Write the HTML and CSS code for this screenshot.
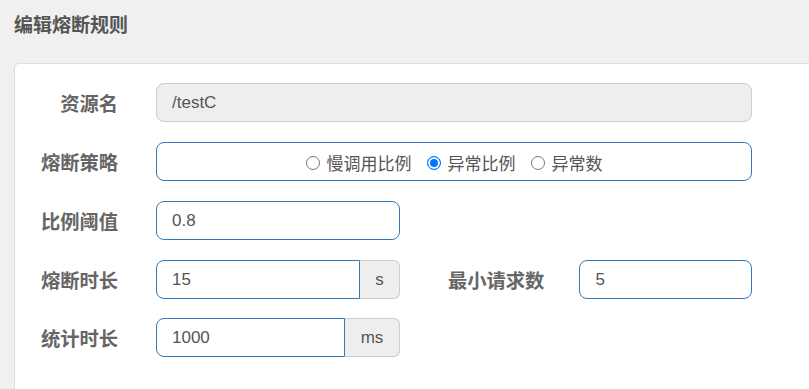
FILE: index.html
```html
<!DOCTYPE html>
<html lang="zh">
<head>
<meta charset="utf-8">
<title>编辑熔断规则</title>
<link rel="stylesheet" href="styles.css">
</head>
<body>
<div class="page">
  <h1 class="title">编辑熔断规则</h1>
  <div class="card">
    <div class="row">
      <label class="label">资源名</label>
      <div class="control full"><input class="input disabled" type="text" value="/testC" disabled></div>
    </div>
    <div class="row">
      <label class="label">熔断策略</label>
      <div class="control full">
        <div class="radio-box">
          <span class="radio-item"><span class="radio"></span>慢调用比例</span>
          <span class="radio-item"><span class="radio checked"></span>异常比例</span>
          <span class="radio-item"><span class="radio"></span>异常数</span>
        </div>
      </div>
    </div>
    <div class="row">
      <label class="label">比例阈值</label>
      <div class="control half"><input class="input" type="text" value="0.8"></div>
    </div>
    <div class="row">
      <label class="label">熔断时长</label>
      <div class="control half group">
        <input class="input grouped" type="text" value="15">
        <span class="addon addon-s">s</span>
      </div>
      <label class="label label2">最小请求数</label>
      <div class="control small"><input class="input" type="text" value="5"></div>
    </div>
    <div class="row">
      <label class="label">统计时长</label>
      <div class="control half group">
        <input class="input grouped" type="text" value="1000">
        <span class="addon addon-ms">ms</span>
      </div>
    </div>
  </div>
</div>
</body>
</html>
```

FILE: styles.css
```css
* { box-sizing: border-box; }
html, body {
  margin: 0;
  padding: 0;
  background: #f0f0f0;
  overflow: hidden;
  height: 389px;
}
body {
  font-family: "Noto Sans CJK SC", "Liberation Sans", sans-serif;
  color: #555;
}
.page {
  padding: 0 0 0 14px;
}
.title {
  margin: 0;
  padding-top: 11px;
  height: 63px;
  font-size: 19px;
  line-height: 26px;
  font-weight: 700;
  color: #555;
}
.card {
  width: 820px;
  height: 340px;
  background: #fff;
  border: 1px solid #ddd;
  border-radius: 5px;
  padding-top: 19px;
}
.row {
  display: flex;
  align-items: center;
  height: 39px;
  margin-bottom: 20px;
}
.row:nth-child(4) { margin-bottom: 19px; }
.label {
  width: 103px;
  text-align: right;
  font-size: 19.3px;
  font-weight: 700;
  color: #666;
  margin-right: 38px;
  white-space: nowrap;
}
.label2 {
  width: auto;
  margin-left: 48px;
  margin-right: 35px;
}
.control { height: 39px; display: flex; }
.full { width: 596px; }
.half { width: 244px; }
.small { width: 173px; }
.input {
  width: 100%;
  min-width: 0;
  height: 39px;
  border: 1px solid #337ab7;
  border-radius: 8px;
  padding: 0 15px;
  font-family: "Liberation Sans", Arial, sans-serif;
  font-size: 17px;
  color: #555;
  background: #fff;
  outline: none;
}
.input.disabled {
  background: #eee;
  border-color: #ccc;
  color: #555;
}
.grouped {
  border-radius: 8px 0 0 8px;
  flex: 1 1 0;
  width: 0;
}
.addon {
  flex: 0 0 auto;
  display: flex;
  align-items: center;
  justify-content: center;
  height: 39px;
  background: #eee;
  border: 1px solid #ccc;
  border-left: 0;
  border-radius: 0 6px 6px 0;
  font-family: "Liberation Sans", Arial, sans-serif;
  font-size: 17px;
  color: #555;
}
.addon-s { width: 40px; }
.addon-ms { width: 55px; }
.radio-box {
  width: 100%;
  height: 39px;
  border: 1px solid #337ab7;
  border-radius: 8px;
  display: flex;
  align-items: center;
  justify-content: center;
  gap: 15px;
  font-size: 17px;
  color: #555;
  padding-top: 2px;
}
.radio-item {
  display: inline-flex;
  align-items: center;
}
.radio {
  width: 14px;
  height: 14px;
  border: 1px solid #767676;
  border-radius: 50%;
  margin-right: 7px;
  display: inline-block;
  background: #fff;
}
.radio.checked {
  border: 1px solid #0075ff;
  background: #0075ff;
  box-shadow: inset 0 0 0 2px #fff;
}
```
